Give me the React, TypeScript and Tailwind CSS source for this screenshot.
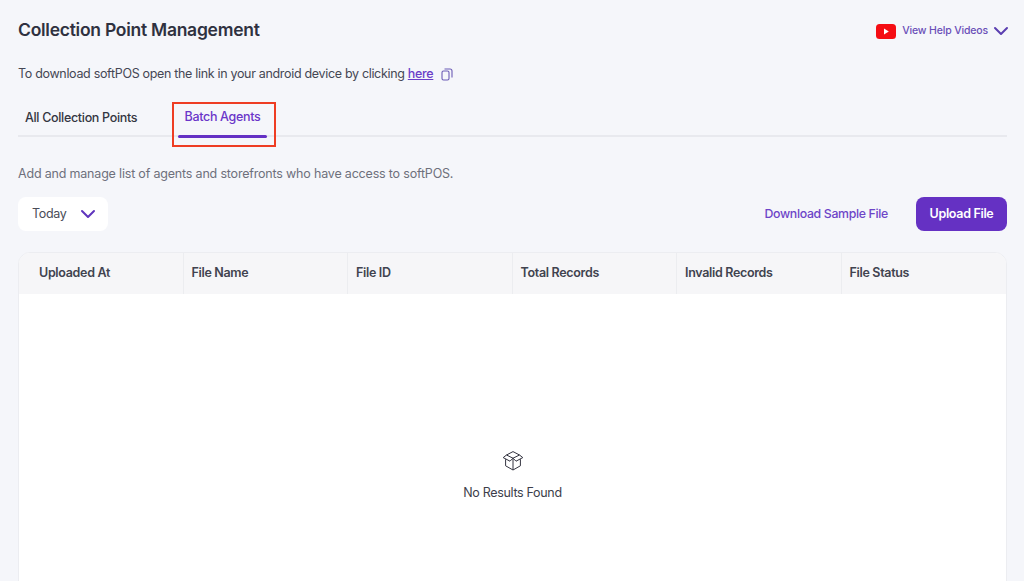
import { ChevronDown } from "lucide-react";

const COLUMNS = ["Uploaded At", "File Name", "File ID", "Total Records", "Invalid Records", "File Status"];

function YoutubeIcon() {
  return (
    <svg width="20" height="15" viewBox="0 0 20 15" aria-hidden="true">
      <rect width="20" height="15" rx="3.5" fill="#f50d13" />
      <path d="M8 4.6v5.8l4.8-2.9z" fill="#fff" />
    </svg>
  );
}

function CopyIcon() {
  return (
    <svg width="12" height="13" viewBox="0 0 12 13" fill="none" stroke="#6b5bb5" strokeWidth="1.1" aria-hidden="true">
      <rect x="1" y="3" width="7" height="9" rx="1.5" />
      <path d="M3.5 1h5.5a2 2 0 0 1 2 2v6.5" />
    </svg>
  );
}

function EmptyBoxIcon() {
  return (
    <svg width="22" height="21" viewBox="0 0 22 21" fill="none" stroke="#33333f" strokeWidth="1" strokeLinejoin="round" aria-hidden="true">
      <path d="M11 8.2 4.5 5 11 1.6 17.5 5z" />
      <path d="M4.5 5 1.2 7.6 8 11.2l3-3 3 3 6.8-3.6L17.5 5" />
      <path d="M3.6 9.2v6.6L11 20l7.4-4.2V9.2" />
      <path d="M11 8.4V20" />
    </svg>
  );
}

export default function App() {
  return (
    <div className="h-[581px] overflow-hidden bg-[#f5f6fa] pl-[18px] pr-[17px] font-['Inter',sans-serif] tracking-[-0.02em]">
      <header className="flex h-[60px] items-center justify-between">
        <h1 className="text-[17.5px] font-semibold tracking-[-0.015em] text-[#2f3140]">Collection Point Management</h1>
        <div className="flex items-center pt-[2px]">
          <YoutubeIcon />
          <span className="ml-[6px] text-[10.5px] font-medium tracking-[-0.015em] text-[#6a4fb8]">View Help Videos</span>
          <ChevronDown className="-mr-[6px] ml-[1px] h-6 w-6 text-[#5b3fb0]" strokeWidth={2} />
        </div>
      </header>

      <p className="mt-[6px] flex h-4 items-center text-[12.5px] text-[#454754]">
        To download softPOS open the link in your android device by clicking&nbsp;
        <a className="font-medium text-[#6a3fc8] underline">here</a>
        <span className="ml-[8px]">
          <CopyIcon />
        </span>
      </p>

      <nav className="relative mt-[16px] flex h-[39px] border-b-2 border-[#e8e9ee]">
        <div className="flex w-[160px] items-center pl-[7px] pt-[3px] text-[12.5px] font-medium text-[#333541]">
          All Collection Points
        </div>
        <div className="relative flex w-[89px] items-center justify-center pt-[1px] text-[12.5px] font-medium text-[#6a35c9]">
          Batch Agents
          <span className="absolute -bottom-[3px] left-0 h-[3px] w-full rounded-full bg-[#6430c4]" />
        </div>
        <span className="absolute left-[154px] top-[4px] h-[45px] w-[104px] border-2 border-[#ee3d23]" />
      </nav>

      <p className="mt-[29px] text-[12.5px] leading-4 tracking-[-0.015em] text-[#6e707c]">
        Add and manage list of agents and storefronts who have access to softPOS.
      </p>

      <div className="mt-[15px] flex items-center justify-between">
        <button className="flex h-[34px] w-[90px] items-center gap-[9px] rounded-lg bg-white pl-[14px] text-[12.5px] text-[#4a4c58]">
          Today
          <ChevronDown className="h-6 w-6 text-[#5f35bd]" strokeWidth={2} />
        </button>
        <div className="flex items-center gap-[28px]">
          <a className="text-[12.3px] font-medium text-[#6d45c8]">Download Sample File</a>
          <button className="h-[34px] w-[91px] rounded-lg bg-[#6531c3] text-[12.5px] font-semibold text-white">
            Upload File
          </button>
        </div>
      </div>

      <section className="mt-[21px] h-[400px] overflow-hidden rounded-t-xl border border-[#ecedf1] bg-white">
        <div className="grid h-[41px] grid-cols-6 bg-[#f6f6f8]">
          {COLUMNS.map((col) => (
            <div
              key={col}
              className="flex items-center border-r border-[#ecedf0] pl-[8px] text-[12.5px] font-semibold text-[#41434f] first:pl-[20px] last:border-r-0"
            >
              {col}
            </div>
          ))}
        </div>
        <div className="flex flex-col items-center pt-[156px]">
          <EmptyBoxIcon />
          <p className="mt-[13px] text-[12.5px] text-[#3c3e4a]">No Results Found</p>
        </div>
      </section>
    </div>
  );
}
